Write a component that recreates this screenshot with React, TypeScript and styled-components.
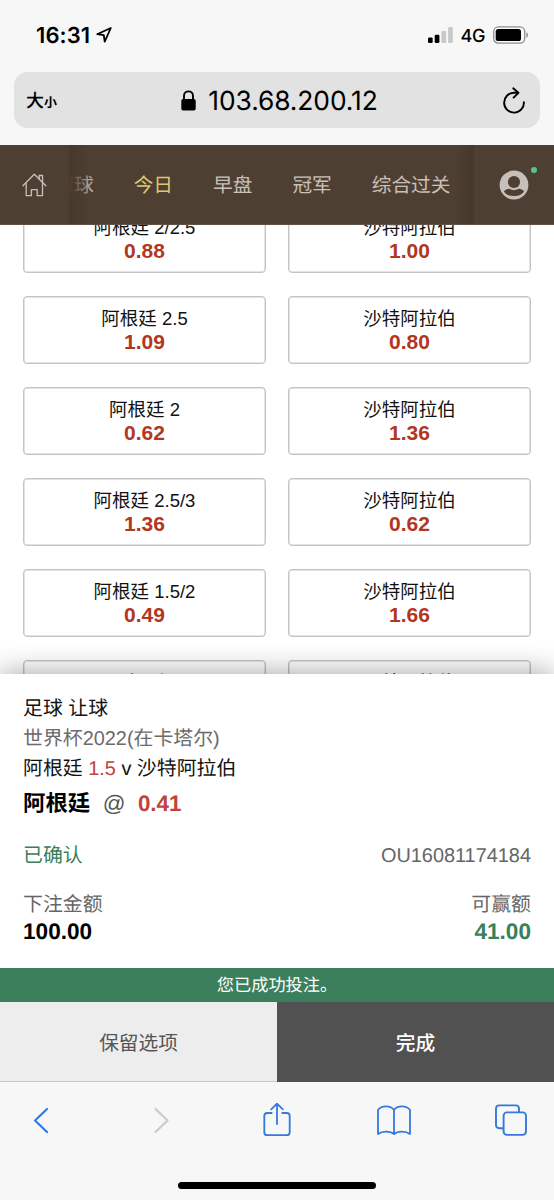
import React from 'react';
import styled, { createGlobalStyle, css } from 'styled-components';

const GlobalStyle = createGlobalStyle`
  * { box-sizing: border-box; }
  html, body { margin: 0; padding: 0; }
  body {
    background: #f7f7f7;
    font-family: "Liberation Sans", "Noto Sans CJK SC", sans-serif;
    color: #000;
    text-rendering: geometricPrecision;
  }
  button { font: inherit; border: 0; margin: 0; padding: 0; background: none; }
  svg { display: block; flex: none; }
`;

const Screen = styled.div`
  width: 554px;
  height: 1200px;
  display: flex;
  flex-direction: column;
  overflow: hidden;
  background: #f7f7f7;
`;

const StatusBar = styled.header`
  height: 72px;
  flex: none;
  display: flex;
  justify-content: space-between;
  padding: 23px 25px 0 36px;
  font-family: Inter, "Liberation Sans", sans-serif;
`;

const StatusGroup = styled.div<{ $gap: number }>`
  display: flex;
  align-items: center;
  gap: ${(p) => p.$gap}px;
  height: 24px;
`;

const Clock = styled.span`
  font-size: 22px;
  font-weight: 600;
  letter-spacing: 0.1px;
  padding-top: 2px;
`;

const Network = styled.span`
  font-size: 18px;
  font-weight: 500;
  letter-spacing: -0.4px;
  padding-top: 2px;
`;

const AddressBar = styled.div`
  height: 56px;
  flex: none;
  margin: 0 14px 17px;
  padding: 0 14px 0 12px;
  border-radius: 14px;
  background: #e2e2e2;
  display: grid;
  grid-template-columns: 60px 1fr 60px;
  align-items: center;
`;

const TextSize = styled.span`
  font-family: "Noto Sans CJK SC", sans-serif;
  font-weight: 500;
  font-size: 18px;
  line-height: 24px;
  padding-top: 2px;
  small { font-size: 13px; font-weight: 600; }
`;

const Address = styled.div`
  display: flex;
  align-items: center;
  justify-content: center;
  gap: 12px;
  padding-left: 7px;
  font-family: Inter, "Liberation Sans", sans-serif;
  font-size: 26.4px;
  letter-spacing: -0.1px;
  white-space: nowrap;
  span { padding-top: 2px; }
`;

const Reload = styled.button`
  justify-self: end;
`;

const Nav = styled.nav`
  height: 80px;
  flex: none;
  display: flex;
  align-items: stretch;
  background: #4e3f33;
  color: #c9c0b9;
  border-bottom: 1px solid #5f5247;
`;

const HomeButton = styled.button`
  width: 69px;
  display: flex;
  align-items: center;
  padding: 1px 0 0 22px;
`;

const TabStrip = styled.div`
  position: relative;
  width: 405px;
  overflow: hidden;
  display: flex;
  justify-content: flex-end;
  align-items: center;
  padding: 2px 23.5px 0 0;
  gap: 40px;
  font-size: 19.7px;
  &::before, &::after {
    content: '';
    position: absolute;
    top: 0;
    bottom: 0;
    width: 24px;
  }
  &::before {
    left: 0;
    background: linear-gradient(90deg, #46382d, rgba(74, 60, 48, 0.4) 70%, rgba(78, 63, 51, 0));
  }
  &::after {
    right: 0;
    width: 20px;
    background: linear-gradient(270deg, #46382d, rgba(78, 63, 51, 0));
  }
`;

const Tab = styled.span<{ $active?: boolean }>`
  flex: none;
  line-height: 30px;
  color: ${(p) => (p.$active ? '#dfc570' : '#c9c0b9')};
`;

const AccountButton = styled.button`
  position: relative;
  flex: 1;
  display: flex;
  align-items: center;
  padding: 1px 0 0 25px;
`;

const OnlineDot = styled.i`
  position: absolute;
  left: 57px;
  top: 22px;
  width: 6px;
  height: 6px;
  border-radius: 50%;
  background: #5cc08c;
`;

const Markets = styled.main`
  height: 449px;
  flex: none;
  overflow: hidden;
  background: #fff;
  padding: 0 23px;
`;

const MarketGrid = styled.div`
  display: grid;
  grid-template-columns: 1fr 1fr;
  gap: 23px 22px;
  margin-top: -20px;
`;

const Selection = styled.button`
  height: 68px;
  border: 1.5px solid #c4c4c4;
  border-radius: 4px;
  background: #fff;
  display: flex;
  flex-direction: column;
  align-items: center;
  justify-content: center;
  line-height: 23px;
  box-shadow: inset 0 0 0 0.5px #c9c9c9;
`;

const Team = styled.span`
  font-size: 18.5px;
  color: #111;
`;

const Odds = styled.b`
  font-size: 21px;
  color: #b2371f;
`;

const Slip = styled.section`
  position: relative;
  height: 294px;
  flex: none;
  padding: 20px 23px 0;
  background: #fff;
  box-shadow: 0 0 28px rgba(0, 0, 0, 0.38);
  font-size: 19.9px;
  line-height: 30px;
`;

const Line = styled.div<{ $muted?: boolean }>`
  height: 30px;
  color: ${(p) => (p.$muted ? '#6b6b6b' : '#111')};
  white-space: pre;
`;

const Handicap = styled.span`
  color: #bf433b;
`;

const Pick = styled.div`
  height: 40px;
  display: flex;
  align-items: center;
  gap: 12.5px;
  font-size: 22.4px;
  font-weight: 700;
`;

const At = styled.span`
  color: #555;
  font-weight: 400;
`;

const Row = styled.div<{ $top: number }>`
  display: flex;
  justify-content: space-between;
  margin-top: ${(p) => p.$top}px;
`;

const Status = styled.span`
  color: #38805c;
`;

const Reference = styled.span`
  color: #666;
`;

const Amount = styled.div<{ $win?: boolean }>`
  display: flex;
  flex-direction: column;
  line-height: 28px;
  color: #666;
  ${(p) => p.$win && css`align-items: flex-end;`}
  b {
    font-size: 22.6px;
    line-height: 26px;
    color: ${(p) => (p.$win ? '#38805c' : '#000')};
  }
`;

const Toast = styled.div`
  position: relative;
  height: 34px;
  flex: none;
  background: #3c7f5d;
  color: #fff;
  font-size: 17.2px;
  line-height: 35px;
  text-align: center;
`;

const Actions = styled.div`
  height: 80px;
  flex: none;
  display: grid;
  grid-template-columns: 1fr 1fr;
`;

const Action = styled.button<{ $primary?: boolean }>`
  font-size: 19.7px;
  background: ${(p) => (p.$primary ? '#515151' : '#ededed')};
  color: ${(p) => (p.$primary ? '#fff' : '#555')};
  font-weight: ${(p) => (p.$primary ? 500 : 400)};
  border-bottom: 1px solid ${(p) => (p.$primary ? '#515151' : '#c8c8c8')};
`;

const Toolbar = styled.footer`
  height: 97px;
  flex: none;
  display: flex;
  justify-content: space-between;
  align-items: flex-start;
  padding: 17px 27px 0 23px;
`;

const HomeIndicator = styled.div`
  width: 198px;
  height: 7px;
  margin: 3px auto 0;
  border-radius: 4px;
  background: #000;
  flex: none;
`;

const markets: [string, string, string, string][] = [
  ['阿根廷 2/2.5', '0.88', '沙特阿拉伯', '1.00'],
  ['阿根廷 2.5', '1.09', '沙特阿拉伯', '0.80'],
  ['阿根廷 2', '0.62', '沙特阿拉伯', '1.36'],
  ['阿根廷 2.5/3', '1.36', '沙特阿拉伯', '0.62'],
  ['阿根廷 1.5/2', '0.49', '沙特阿拉伯', '1.66'],
  ['阿根廷 3', '1.66', '沙特阿拉伯', '0.49'],
];

const LocationIcon = () => (
  <svg width="16" height="16" viewBox="0 0 16 16" fill="none" stroke="#000" strokeWidth="1.8" strokeLinejoin="round">
    <path d="M14.8 1 1.2 7.2l6.6.9.9 6.600z" />
  </svg>
);

const SignalIcon = () => (
  <svg width="25" height="16" viewBox="0 0 25 16">
    <rect x="0" y="10.5" width="4.7" height="5.5" rx="1.2" />
    <rect x="6.7" y="7.7" width="4.7" height="8.3" rx="1.2" />
    <rect x="13.4" y="4" width="4.7" height="12" rx="1.2" fill="#c8c8c8" />
    <rect x="20.1" y="0" width="4.7" height="16" rx="1.2" fill="#c8c8c8" />
  </svg>
);

const BatteryIcon = () => (
  <svg width="36" height="18" viewBox="0 0 36 18">
    <rect x="0.7" y="0.9" width="31" height="16.2" rx="4.6" fill="none" stroke="#8f8f8f" strokeWidth="1.3" />
    <rect x="2.7" y="3" width="25.3" height="12" rx="2.6" />
    <path d="M33.3 6.2v5.6c2.2-.8 2.2-4.8 0-5.6z" fill="#8f8f8f" />
  </svg>
);

const LockIcon = () => (
  <svg width="15" height="21" viewBox="0 0 15 21">
    <rect x="0.3" y="9" width="14.4" height="11.5" rx="1.8" />
    <path d="M3 10V6C3 -.2 12 -.2 12 6v4" fill="none" stroke="#000" strokeWidth="1.9" />
  </svg>
);

const ReloadIcon = () => (
  <svg width="24" height="27" viewBox="0 0 24 27" fill="none" stroke="#000" strokeWidth="1.9" strokeLinecap="round" strokeLinejoin="round">
    <path d="M21.9 15.2A9.9 9.9 0 1 1 12 5.8h4" />
    <path d="m11.2 1.3 5.2 4.5-4.8 4.8" />
  </svg>
);

const HouseIcon = () => (
  <svg width="25" height="24" viewBox="0 0 25 24" fill="none" stroke="#c9c0b9" strokeWidth="1.3" strokeLinejoin="round" strokeLinecap="round">
    <path d="M.9 12.7 12.3 1.2 23.8 12.7" />
    <path d="M17.2 5.7V2.5h3.3V9" />
    <path d="M4.2 10.4v12.3h5.2v-6h5.8v6h5.3V10.4" />
  </svg>
);

const AccountIcon = () => (
  <svg width="30" height="30" viewBox="0 0 30 30">
    <circle cx="15" cy="15" r="14.4" fill="#c7bfb9" />
    <circle cx="15" cy="12" r="6.1" fill="#4e3f33" />
    <path d="M4.900 21.300Q7 18.500 10.200 18.700Q15 21.600 19.800 18.700Q23 18.500 25.100 21.300Q23 26 15 26T4.900 21.300z" fill="#4e3f33" />
  </svg>
);

const BackIcon = () => (
  <svg width="36" height="44" viewBox="0 0 36 44" fill="none" stroke="#3478e0" strokeWidth="2.2" strokeLinecap="round" strokeLinejoin="round">
    <path d="M24 10 12 21.5 24 33" />
  </svg>
);

const ForwardIcon = () => (
  <svg width="36" height="44" viewBox="0 0 36 44" fill="none" stroke="#cbcbcb" strokeWidth="2.2" strokeLinecap="round" strokeLinejoin="round">
    <path d="m12.500 10 12 11.500-12 11.500" />
  </svg>
);

const ShareIcon = () => (
  <svg width="31" height="44" viewBox="0 0 31 44" fill="none" stroke="#3478e0" strokeWidth="1.8" strokeLinecap="round" strokeLinejoin="round">
    <path d="M8.7 14H4.3q-3 0-3 3v16.2q0 3 3 3h19.4q3 0 3-3V17q0-3-3-3h-4.4" />
    <path d="M14 25V5M8.2 10.4 14 4.6l5.8 5.8" />
  </svg>
);

const BookIcon = () => (
  <svg width="34" height="44" viewBox="0 0 34 44" fill="none" stroke="#3478e0" strokeWidth="1.8" strokeLinejoin="round">
    <path d="M17 11C13.500 6.200 4.700 6.200 1 11v24c4.200-3.200 12.300-3.200 16 0 3.700-3.200 11.800-3.200 16 0V11C29.300 6.200 20.500 6.200 17 11zM17 11v24" />
  </svg>
);

const TabsIcon = () => (
  <svg width="32" height="44" viewBox="0 0 32 44" fill="none" stroke="#3478e0" strokeWidth="1.9" strokeLinejoin="round">
    <path d="M8 29.200H4.300q-3.300 0-3.300-3.300V9.700q0-3.300 3.300-3.300h16.400q3.300 0 3.300 3.300v3.700" />
    <rect x="8.600" y="13.400" width="22.400" height="22.500" rx="3.300" />
  </svg>
);

export default function App() {
  return (
    <Screen>
      <GlobalStyle />
      <StatusBar>
        <StatusGroup $gap={6}>
          <Clock>16:31</Clock>
          <LocationIcon />
        </StatusGroup>
        <StatusGroup $gap={8}>
          <SignalIcon />
          <Network>4G</Network>
          <BatteryIcon />
        </StatusGroup>
      </StatusBar>
      <AddressBar>
        <TextSize>大<small>小</small></TextSize>
        <Address><LockIcon /><span>103.68.200.12</span></Address>
        <Reload aria-label="刷新"><ReloadIcon /></Reload>
      </AddressBar>

      <Nav>
        <HomeButton aria-label="主页"><HouseIcon /></HomeButton>
        <TabStrip>
          <Tab>滚球</Tab>
          <Tab $active>今日</Tab>
          <Tab>早盘</Tab>
          <Tab>冠军</Tab>
          <Tab>综合过关</Tab>
        </TabStrip>
        <AccountButton aria-label="账户"><AccountIcon /><OnlineDot /></AccountButton>
      </Nav>

      <Markets>
        <MarketGrid>
          {markets.map(([home, homeOdds, away, awayOdds]) => (
            <React.Fragment key={home}>
              <Selection><Team>{home}</Team><Odds>{homeOdds}</Odds></Selection>
              <Selection><Team>{away}</Team><Odds>{awayOdds}</Odds></Selection>
            </React.Fragment>
          ))}
        </MarketGrid>
      </Markets>

      <Slip>
        <Line>足球 让球</Line>
        <Line $muted>世界杯2022(在卡塔尔)</Line>
        <Line>阿根廷 <Handicap>1.5</Handicap> v 沙特阿拉伯</Line>
        <Pick>阿根廷<At>@</At><Handicap>0.41</Handicap></Pick>
        <Row $top={17}>
          <Status>已确认</Status>
          <Reference>OU16081174184</Reference>
        </Row>
        <Row $top={20}>
          <Amount><span>下注金额</span><b>100.00</b></Amount>
          <Amount $win><span>可赢额</span><b>41.00</b></Amount>
        </Row>
      </Slip>
      <Toast>您已成功投注。</Toast>
      <Actions>
        <Action>保留选项</Action>
        <Action $primary>完成</Action>
      </Actions>

      <Toolbar>
        <BackIcon />
        <ForwardIcon />
        <ShareIcon />
        <BookIcon />
        <TabsIcon />
      </Toolbar>
      <HomeIndicator />
    </Screen>
  );
}
